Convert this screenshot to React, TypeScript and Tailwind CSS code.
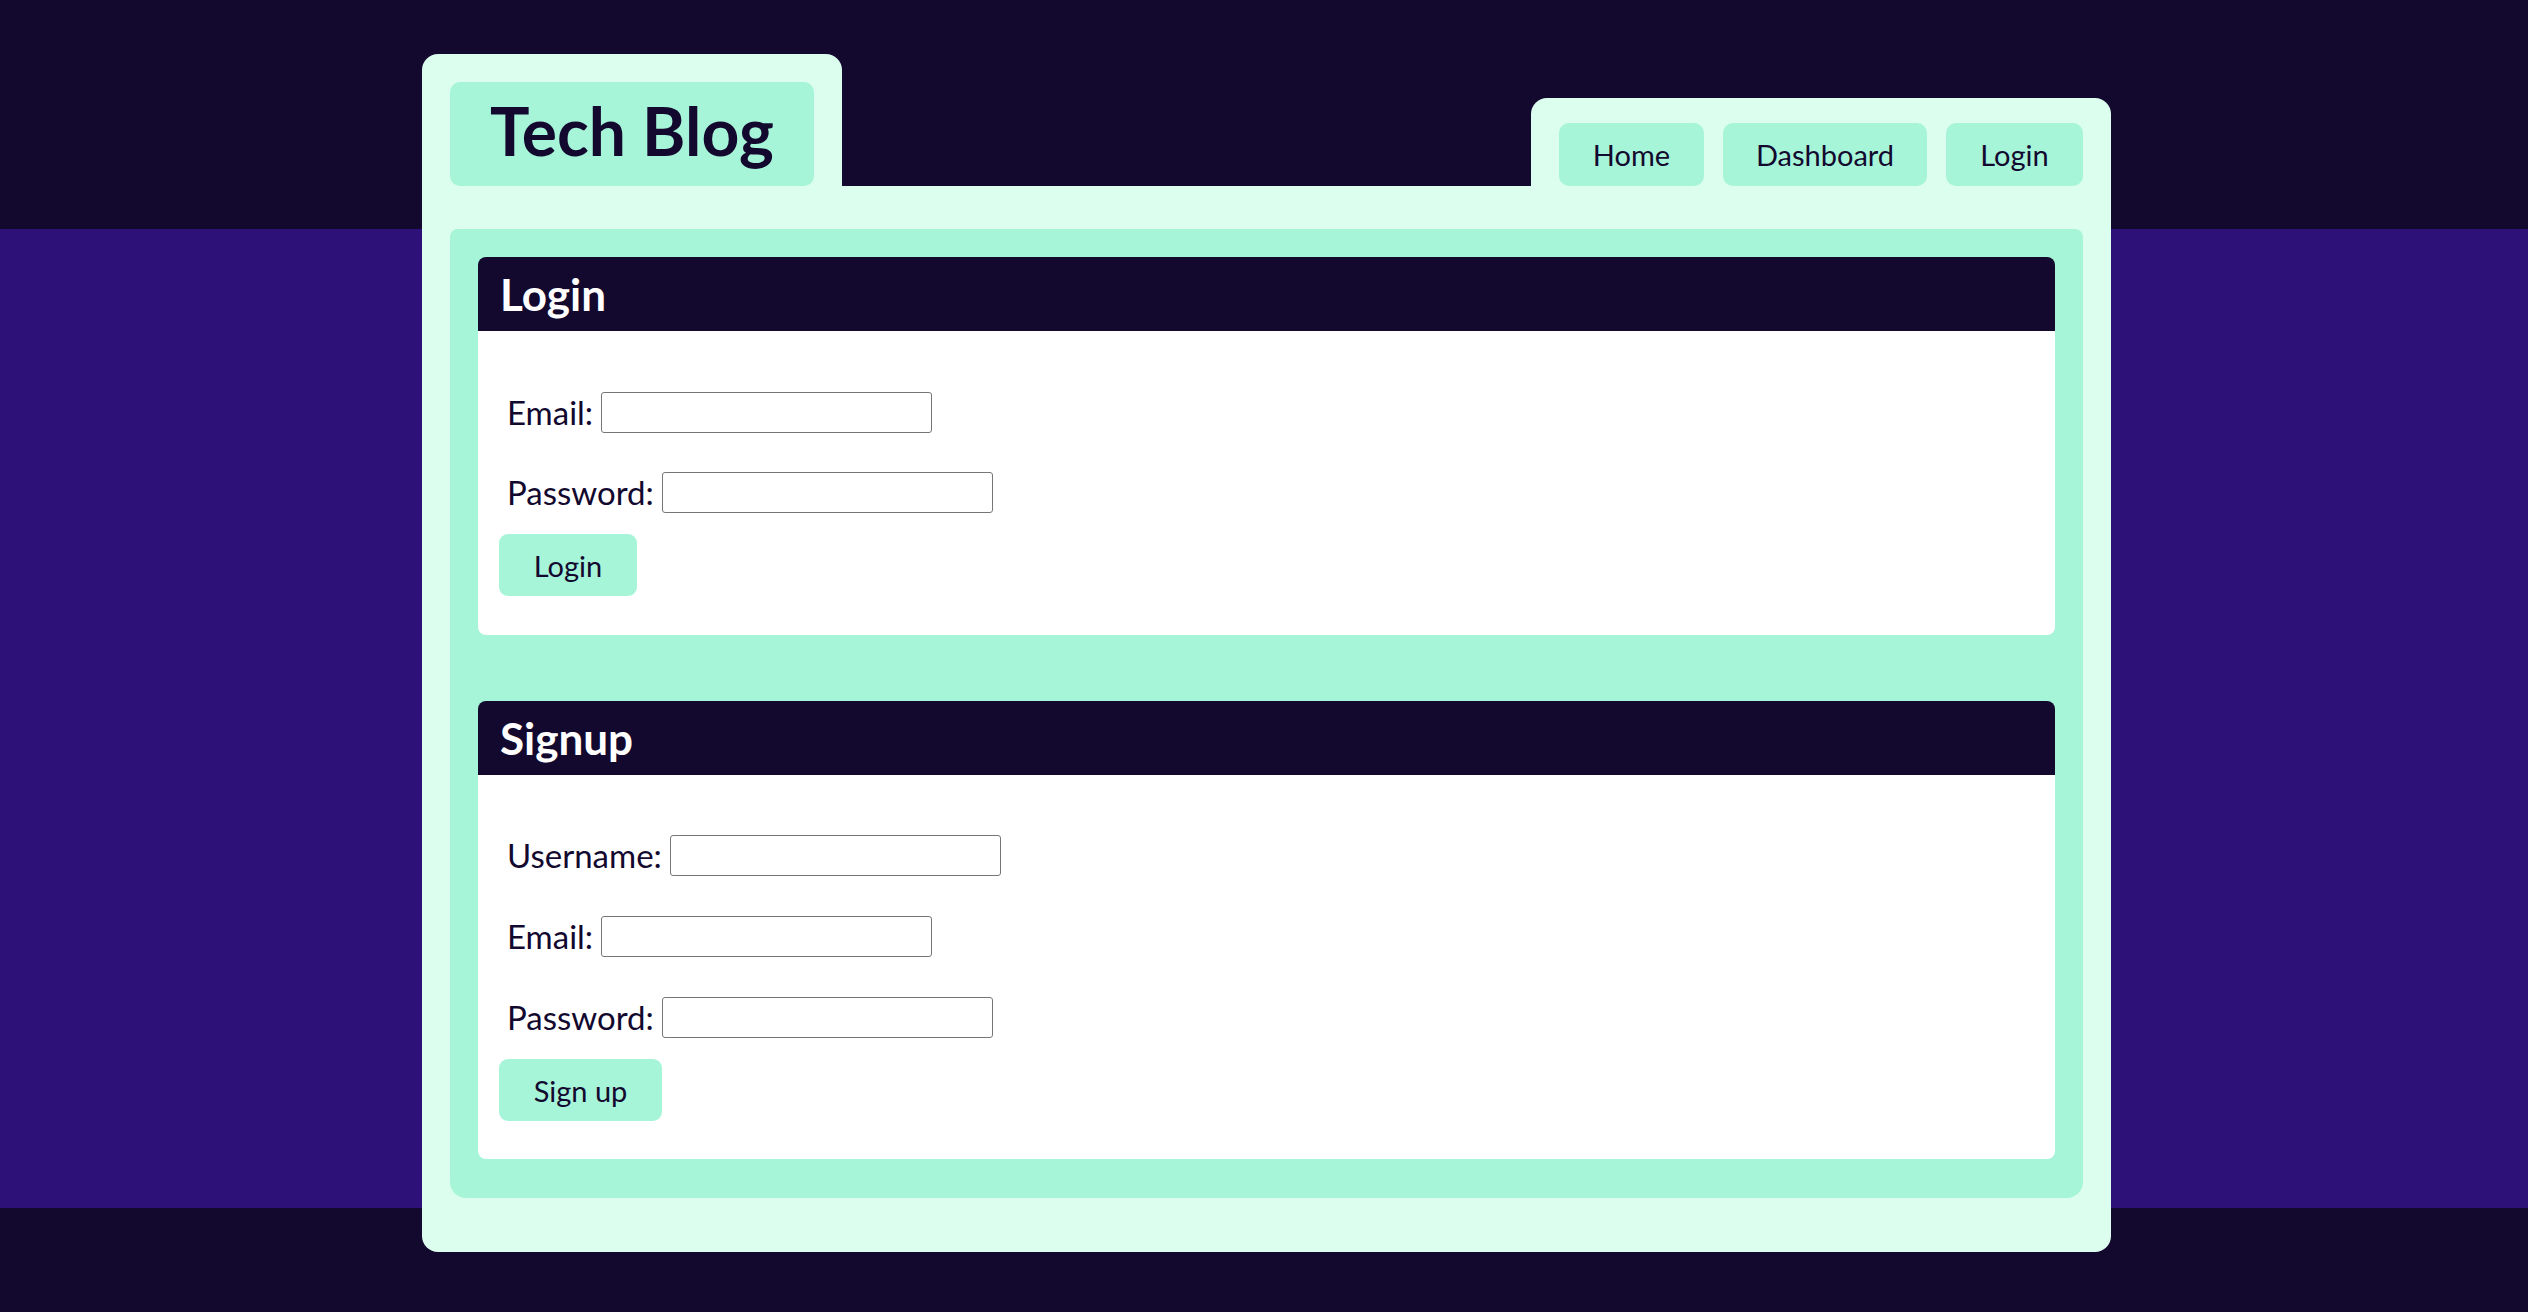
import React from "react";

function Field({ label, className = "" }: { label: string; className?: string }) {
  return (
    <div className={`flex items-center h-[41px] pl-[29px] ${className}`}>
      <label className="text-[33px] leading-none text-[#13092f]">{label}</label>
      <input
        type="text"
        className="ml-[8px] w-[331px] h-[41px] border border-[#767676] rounded-[3px] bg-white outline-none"
      />
    </div>
  );
}

function Card({
  title,
  fields,
  button,
  buttonWidth,
  pt,
  pb,
  gap,
}: {
  title: string;
  fields: string[];
  button: string;
  buttonWidth: string;
  pt: string;
  pb: string;
  gap: string;
}) {
  return (
    <section className="flex flex-col">
      <div className="h-[74px] bg-[#13092f] rounded-t-[8px] flex items-center pl-[22px]">
        <h2 className="text-[44px] font-bold text-white leading-none">{title}</h2>
      </div>
      <div className={`bg-white rounded-b-[8px] flex flex-col ${pt} ${pb}`}>
        {fields.map((f, i) => (
          <Field key={f} label={f} className={i > 0 ? gap : ""} />
        ))}
        <button
          className={`mt-[21px] ml-[21px] h-[62px] ${buttonWidth} bg-[#a6f5d9] rounded-[9px] text-[29px] text-[#13092f] leading-none`}
        >
          {button}
        </button>
      </div>
    </section>
  );
}

export default function App() {
  return (
    <div className="min-h-[1312px] w-full font-[Lato,sans-serif] bg-[linear-gradient(to_bottom,#13092f_0px,#13092f_229px,#2e1178_229px,#2e1178_1208px,#13092f_1208px)] pt-[54px] pb-[60px]">
      <div className="w-[1689px] ml-[422px] flex flex-col">
        <div className="flex justify-between items-end">
          <div className="bg-[#dcfeee] rounded-t-[16px] pt-[28px] px-[28px]">
            <div className="w-[364px] h-[104px] bg-[#a6f5d9] rounded-[10px] flex items-center justify-center">
              <h1 className="text-[66px] font-bold leading-none text-[#13092f] -mt-[6px]">Tech Blog</h1>
            </div>
          </div>
          <nav className="bg-[#dcfeee] rounded-t-[16px] pt-[25px] px-[28px] flex gap-[19px]">
            <a className="w-[145px] h-[63px] bg-[#a6f5d9] rounded-[10px] flex items-center justify-center text-[29px] text-[#13092f]">
              Home
            </a>
            <a className="w-[204px] h-[63px] bg-[#a6f5d9] rounded-[10px] flex items-center justify-center text-[29px] text-[#13092f]">
              Dashboard
            </a>
            <a className="w-[137px] h-[63px] bg-[#a6f5d9] rounded-[10px] flex items-center justify-center text-[29px] text-[#13092f]">
              Login
            </a>
          </nav>
        </div>
        <div className="bg-[#dcfeee] rounded-b-[16px] pt-[43px] px-[28px] pb-[54px]">
          <main className="bg-[#a6f5d9] rounded-t-[8px] rounded-b-[16px] pt-[28px] px-[28px] pb-[39px] flex flex-col gap-[66px]">
            <Card
              title="Login"
              fields={["Email:", "Password:"]}
              button="Login"
              buttonWidth="w-[138px]"
              pt="pt-[61px]"
              pb="pb-[39px]"
              gap="mt-[39px]"
            />
            <Card
              title="Signup"
              fields={["Username:", "Email:", "Password:"]}
              button="Sign up"
              buttonWidth="w-[163px]"
              pt="pt-[60px]"
              pb="pb-[38px]"
              gap="mt-[40px]"
            />
          </main>
        </div>
      </div>
    </div>
  );
}
